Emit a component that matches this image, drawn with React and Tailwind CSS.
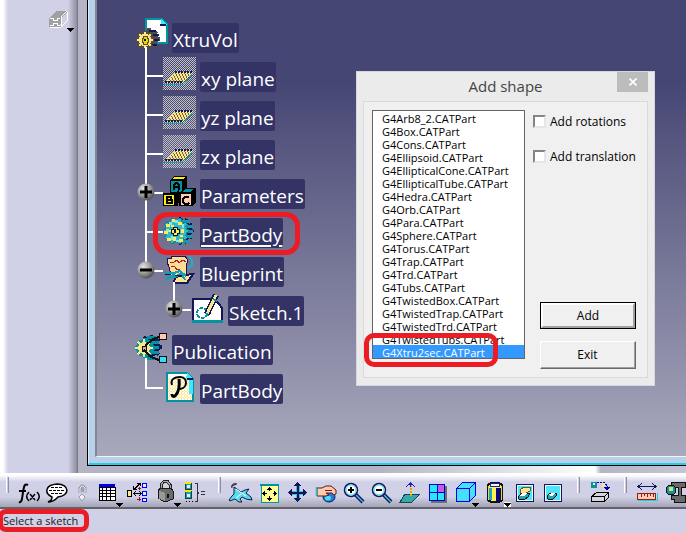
import React from "react";

const NAVY = "#15155a";
const TEAL = "#0093a0";

const shapes = [
  "G4Arb8_2.CATPart",
  "G4Box.CATPart",
  "G4Cons.CATPart",
  "G4Ellipsoid.CATPart",
  "G4EllipticalCone.CATPart",
  "G4EllipticalTube.CATPart",
  "G4Hedra.CATPart",
  "G4Orb.CATPart",
  "G4Para.CATPart",
  "G4Sphere.CATPart",
  "G4Torus.CATPart",
  "G4Trap.CATPart",
  "G4Trd.CATPart",
  "G4Tubs.CATPart",
  "G4TwistedBox.CATPart",
  "G4TwistedTrap.CATPart",
  "G4TwistedTrd.CATPart",
  "G4TwistedTubs.CATPart",
  "G4Xtru2sec.CATPart",
];

/* Outline of a toothed wheel around (cx, cy) */
function gearPath(cx, cy, inner, outer, teeth) {
  const points = [];
  const step = (Math.PI * 2) / teeth;
  for (let i = 0; i < teeth; i += 1) {
    const a = i * step;
    [
      [-0.25, inner],
      [-0.2, outer],
      [0.2, outer],
      [0.25, inner],
    ].forEach(([k, r]) => {
      points.push(`${(cx + r * Math.cos(a + k * step)).toFixed(2)} ${(cy + r * Math.sin(a + k * step)).toFixed(2)}`);
    });
  }
  return `M${points.join("L")}z`;
}

/* Checkerboard of single cells over a rectangle */
function checkerPath(x0, y0, width, height) {
  let d = "";
  for (let y = 0; y < height; y += 1) {
    for (let x = y % 2; x < width; x += 2) d += `M${x0 + x} ${y0 + y}h1v1h-1z`;
  }
  return d;
}

/* Sparse dots over the slanted sheet of a plane */
function weavePath() {
  let d = "";
  for (let y = 20; y < 29; y += 2) {
    const left = 13 - (y - 19);
    for (let x = left; x < left + 17; x += 3) d += `M${x} ${y}h1v1h-1zM${x + 1} ${y + 1}h1v1h-1z`;
  }
  return d;
}

const DOTS = checkerPath(0, 4, 33, 33);
const WEAVE = weavePath();

/* ---------- tree drawings: every one is 33 x 39, one row high ---------- */

function RowArt({ children }) {
  return (
    <svg viewBox="0 0 33 39" className="h-[39px] w-[33px] shrink-0" shapeRendering="crispEdges" aria-hidden="true">
      {children}
    </svg>
  );
}

function ProductArt() {
  return (
    <RowArt>
      <path d="M11 5h16l5 5v19H11z" fill="#fff" stroke={TEAL} strokeWidth="2" />
      <path d="M26 5l6 6h-6z" fill="#40e8ff" />
      <path d="M25 10h6v2h-6z" fill={NAVY} />
      <path d={gearPath(14, 25, 9, 11, 8)} fill="#4b4b4b" />
      <path d="M14 17h7M18 21h6M18 26h6M15 31h7" stroke={NAVY} strokeWidth="2" />
      <path d={gearPath(10, 26, 7, 9, 8)} fill="#ffe68a" stroke="#55502f" strokeWidth="1" />
      <path d="M8 22h4v2h1v4h-1v2H8v-2H7v-4h1z" fill="#e8d800" stroke="#55502f" strokeWidth="1" />
      <path d="M9 25h2v2H9z" fill="#111" />
      <path d="M10 33h2v6h-2z" fill="#fff" />
    </RowArt>
  );
}

function PlaneArt() {
  return (
    <RowArt>
      <path d={DOTS} fill="#c2c2c2" />
      <path d="M12 19h18L20 30H2z" fill="#ffe68a" />
      <path d={WEAVE} fill="#6b6446" />
      <path d="M12 19h18M2 29h18" stroke={NAVY} strokeWidth="2" strokeDasharray="2 1" />
      <path d="M1 31h20l9-11" fill="none" stroke="#1b9fb0" strokeWidth="1" />
    </RowArt>
  );
}

function BlocksArt() {
  return (
    <RowArt>
      <path d="M7 10l4-4h13v13l-4 4H7z" fill="#000" />
      <path d="M11 7h11l-2 2H9z" fill="#fff000" />
      <path d="M8 11h11v11H8z" fill={TEAL} />
      <path d="M11 20v-5l2-2h1l2 2v5M11 17h5" fill="none" stroke="#000" strokeWidth="1.5" />
      <path d="M0 23h15v13H0zM12 23l4-4v13l-3 4z" fill="#000" />
      <path d="M1 25h10v10H1z" fill="#fff000" />
      <path d="M4 27h4v3H4zM4 30h5v3H4z" fill="none" stroke="#000" strokeWidth="1.5" />
      <path d="M16 23l5-5h12v14l-4 4H16z" fill="#000" />
      <path d="M22 19h8l-2 3h-8z" fill={TEAL} />
      <path d="M18 24h10v11H18z" fill="#ffcbae" />
      <path d="M26 28l-1-1h-3l-2 2v3l2 2h3l1-1" fill="none" stroke="#000" strokeWidth="1.5" />
    </RowArt>
  );
}

function BodyArt() {
  return (
    <RowArt>
      <path d={gearPath(17, 22, 12, 14, 12)} fill={NAVY} />
      <path d="M18 12h9M21 17h9M21 22h9M21 27h9M18 32h9" stroke="#1c98a8" strokeWidth="3" />
      <path d={gearPath(13, 22, 11, 13, 10)} fill="#35b9ca" stroke="#0c8496" strokeWidth="1" />
      <path d="M6 13h3v3H6zM12 11h3v3h-3zM19 15h2v4h-2zM3 20h3v3H3zM13 31h4v2h-4zM8 27h2v4H8z" fill="#7ceaf5" />
      <path d="M9 10h3v3H9zM3 15h4v3H3zM15 13h4v3h-4zM1 22h4v3H1zM6 21h2v2H6zM4 29h4v3H4zM10 28h3v4h-3zM16 30h4v3h-4zM18 20h3v4h-3zM8 16h3v2H8zM17 26h3v2h-3z" fill="#ffec50" />
      <path d="M10 18h4v2h2v4h-2v2h-4v-2H8v-4h2z" fill="#ffec50" stroke="#061c38" strokeWidth="1" />
      <path d="M11 20h2v4h-2z" fill="#061c38" />
    </RowArt>
  );
}

function BlueprintArt() {
  return (
    <RowArt>
      <path d="M4 10h4V8h14l3 4-2 6v8l-2 3-6 3-7-5-2-8-2-5z" fill="#ffdc96" stroke={NAVY} strokeWidth="1" />
      <path d="M7 14h4l3-2 2 3 4-3 3 2M8 18l4 1 2 3 3-1" fill="none" stroke="#a41d28" strokeWidth="1" />
      <path d="M12 29l10-2 8-1-6 9H11z" fill="#ffe68a" stroke={NAVY} strokeWidth="2" />
      <path d="M1 25h10l6-2 6 5M4 29h8l7-4M3 32l9-6M18 25l4 7" fill="none" stroke="#159db3" strokeWidth="2" />
      <path d="M2 27l5-1M12 27l7 1" stroke={NAVY} />
      <path d="M26 8l3 4v5l-4 3" fill="none" stroke="#22afc3" strokeWidth="2" />
      <path d="M10 34h2v5h-2z" fill="#fff" />
    </RowArt>
  );
}

function SketchArt() {
  return (
    <RowArt>
      <path d="M2 12h22l7 9v13H2z" fill="#fff" stroke={NAVY} strokeWidth="2" />
      <path d="M1 33h31v3H1z" fill={TEAL} />
      <circle cx="11" cy="26" r="5" fill="none" stroke={TEAL} strokeWidth="2" strokeDasharray="4 1" />
      <path d="M25 8L16 27" stroke={NAVY} strokeWidth="6" />
      <path d="M25 8L16 27" stroke="#ffe68a" strokeWidth="3" />
      <path d="M22 12l4 2M15 26l2 3" stroke={TEAL} strokeWidth="2" />
    </RowArt>
  );
}

function PublicationArt() {
  return (
    <RowArt>
      <path d={gearPath(15, 21, 10, 12, 9)} fill={NAVY} />
      <path d="M12 11h9M16 16h8M17 21h7M16 26h8M12 32h9" stroke={TEAL} strokeWidth="3" />
      <path d={gearPath(10, 22, 9, 10, 8)} fill={TEAL} />
      <path d={gearPath(9, 22, 6, 9, 8)} fill="#ffe68a" />
      <path d="M7 20h4v5H7z" fill="#d6ad85" stroke="#111" />
      <path d="M10 20l8-7 6-2M9 24l7 7 8 3" fill="none" stroke="#111" strokeWidth="2" />
      <path d="M24 7h7v6h-7z" fill="#ffcbae" stroke="#111" />
      <path d="M24 30h7v6h-7z" fill="#33dff5" stroke="#111" />
      <path d="M10 32h2v7h-2z" fill="#fff" />
    </RowArt>
  );
}

function PublishedArt() {
  return (
    <RowArt>
      <defs>
        <pattern id="grain" width="3" height="3" patternUnits="userSpaceOnUse">
          <path d="M0 0h3v3H0z" fill="#fff" />
          <path d="M0 0h1v2H0zM1 2h2v1H1z" fill="#ffe68a" />
        </pattern>
      </defs>
      <path d="M4 8h20l6 6v22H4z" fill="url(#grain)" stroke={TEAL} strokeWidth="2" />
      <path d="M5 9h18v4H5z" fill="#fff" />
      <path d="M24 8l6 6v15h-4V14h-3z" fill="#40e8ff" />
      <path d="M24 14h6" stroke={NAVY} strokeWidth="2" />
      <g shapeRendering="auto" fill="none" stroke="#000">
        <path d="M16 14c1 8 0 13-4 17-2 1-3 0-3-2" strokeWidth="3" />
        <path d="M9 20c-2-6 3-8 8-8 8 0 8 11 0 12" strokeWidth="2" />
      </g>
    </RowArt>
  );
}

/* Gutter left of a row: guide line, stub, and the expand knob where there is one */
function Gutter({ knob, last }) {
  return (
    <svg viewBox="0 0 28 39" className="h-[39px] w-7 shrink-0" aria-hidden="true">
      <defs>
        <radialGradient id="ball" cx="35%" cy="30%" r="75%">
          <stop offset="0" stopColor="#e4e4e4" />
          <stop offset="0.5" stopColor="#a0a0a0" />
          <stop offset="1" stopColor="#4c4c4c" />
        </radialGradient>
      </defs>
      <g fill="#fff" shapeRendering="crispEdges">
        <rect x="10" y="0" width="2" height={last ? 24 : 39} />
        <rect x="10" y="22" width="18" height="2" />
      </g>
      {knob && (
        <>
          <circle cx="11" cy="22" r="8.5" fill="url(#ball)" />
          <path d={knob === "plus" ? "M5 22h12M11 16v12" : "M5 22h12"} stroke="#000" strokeWidth="3" />
        </>
      )}
    </svg>
  );
}

function Mark({ className }) {
  return <span aria-hidden="true" className={`pointer-events-none absolute border-[5px] border-[#ec1c24] ${className}`} />;
}

function Row({ art, label, knob, last, root, current, children }) {
  return (
    <li>
      <div className="relative flex h-[39px]">
        {!root && <Gutter knob={knob} last={last} />}
        {art}
        <span
          className={`ml-1 mt-[9px] flex h-[30px] items-center rounded-xs bg-[#333366] px-px pt-1 whitespace-nowrap ${current ? "underline decoration-2 underline-offset-3" : ""}`}
        >
          {label}
        </span>
        {current && <Mark className="top-[3px] left-[18px] h-[43px] w-[147px] rounded-[14px]" />}
      </div>
      {children && <ul className={root ? "" : "ml-7"}>{children}</ul>}
    </li>
  );
}

function Tree() {
  return (
    <ul className="pt-[14px] pl-[38px] font-['Open_Sans','Noto_Sans',sans-serif] text-[19px] leading-6 text-white">
      <Row root art={<ProductArt />} label="XtruVol">
        <Row art={<PlaneArt />} label="xy plane" />
        <Row art={<PlaneArt />} label="yz plane" />
        <Row art={<PlaneArt />} label="zx plane" />
        <Row art={<BlocksArt />} label="Parameters" knob="plus" />
        <Row art={<BodyArt />} label="PartBody" current />
        <Row art={<BlueprintArt />} label="Blueprint" knob="minus" last>
          <Row art={<SketchArt />} label="Sketch.1" knob="plus" last />
        </Row>
      </Row>
      <Row root art={<PublicationArt />} label="Publication">
        <Row art={<PublishedArt />} label="PartBody" last />
      </Row>
    </ul>
  );
}

/* ---------- dialog ---------- */

function Check({ id, label }) {
  return (
    <div className="flex h-[15px] items-center gap-1">
      <input
        id={id}
        type="checkbox"
        className="size-[13px] appearance-none border-2 border-t-[#858585] border-r-[#e6e6e6] border-b-[#e6e6e6] border-l-[#858585] bg-white checked:bg-[#3399ff]"
      />
      <label htmlFor={id} className="whitespace-nowrap">{label}</label>
    </div>
  );
}

function AddShapeDialog() {
  return (
    <section
      role="dialog"
      aria-label="Add shape"
      className="absolute top-[71px] left-[259px] w-[299px] border border-[#d6d6dc] bg-[#ebebeb] px-[6px] pb-[7px] font-['Open_Sans','Noto_Sans',sans-serif] text-black"
    >
      <header className="relative flex h-[29px] items-center justify-center">
        <h1 className="text-[15px] text-[#444]">Add shape</h1>
        <button type="button" aria-label="Close" className="absolute top-0 right-0 flex h-5 w-[31px] items-center justify-center bg-[#bcbcbc]">
          <svg viewBox="0 0 8 8" className="size-2" aria-hidden="true">
            <path d="M0.5 0.5l7 7M7.5 0.5l-7 7" stroke="#fff" strokeWidth="1.6" />
          </svg>
        </button>
      </header>
      <div className="flex h-[277px] gap-2 border border-[#dadada] bg-[#f0f0f0] px-2 pt-2">
        <div className="relative h-[249px] w-[153px] shrink-0">
          <select
            size={19}
            aria-label="Shapes"
            defaultValue="G4Xtru2sec.CATPart"
            className="block h-[249px] w-full overflow-hidden rounded-none border border-[#646464] bg-white p-0 text-[11px] leading-[13px]"
          >
            {shapes.map((s) => (
              <option key={s} value={s} className="h-[13px] min-h-0 py-0 pr-0 pl-[9px] leading-[13px] checked:bg-[#3399ff] checked:text-white">
                {s}
              </option>
            ))}
          </select>
          <Mark className="top-[223px] -left-[8px] h-[34px] w-[134px] rounded-[10px]" />
        </div>
        <div className="flex flex-1 flex-col text-xs leading-[15px]">
          <div className="flex flex-col gap-5 pt-1">
            <Check id="rot" label="Add rotations" />
            <Check id="tra" label="Add translation" />
          </div>
          <div className="mt-auto mb-2 ml-[7px] flex w-24 flex-col gap-3">
            <button type="button" className="h-[27px] border border-black bg-[#f0f0f0] p-0">
              <span className="flex h-full items-center justify-center border-2 border-t-white border-r-[#a0a0a0] border-b-[#a0a0a0] border-l-white">Add</span>
            </button>
            <button type="button" className="h-7 border border-t-white border-r-[#696969] border-b-[#696969] border-l-white bg-[#f0f0f0] p-0">
              <span className="flex h-full items-center justify-center border-r border-b border-[#a0a0a0]">Exit</span>
            </button>
          </div>
        </div>
      </div>
    </section>
  );
}

/* ---------- bottom toolbar ---------- */

/* low: the drawing starts four rows down instead of one */
function Tool({ name, wide, low, smooth, children }) {
  return (
    <button type="button" aria-label={name} className={`h-[35px] shrink-0 ${wide ? "w-8" : "w-7"}`}>
      <svg
        viewBox={`0 ${low ? -4 : -1} ${wide ? 32 : 28} 35`}
        className="h-[35px] w-full"
        fill="none"
        shapeRendering={smooth ? "auto" : "crispEdges"}
        aria-hidden="true"
      >
        {children}
      </svg>
    </button>
  );
}

function Shade({ d }) {
  return <path d={d} stroke="#b4b4c4" strokeWidth="2" strokeDasharray="1 1" />;
}

function Grip({ className }) {
  return (
    <span aria-hidden="true" className={`h-full shrink-0 pt-1 ${className}`}>
      <span className="block h-4 w-[3px] border-r border-l border-r-[#8e8ea4] border-l-white bg-[#cacade]" />
    </span>
  );
}

function Toolbar() {
  return (
    <div role="toolbar" aria-label="Tools" className="flex h-9 shrink-0 overflow-hidden border-b-2 border-[#62626c] bg-[linear-gradient(to_bottom,#ffffff_0,#ffffff_2px,#d0d0e6_9px,#d0d0e6_24px,#a4a4b6_100%)]">
      <Grip className="w-[15px] pl-[6px]" />
      <Tool name="Formula" low smooth>
        <Shade d="M5 27h16M20 25h6" />
        <path d="M13 8c-4-2-4 2-5 7-1 7-1 11-4 10M4 14h7" stroke="#000" strokeWidth="2" />
        <path d="M14 15c-3 3-3 6 0 9M22 15c3 3 3 6 0 9M15 17l5 6M20 17l-5 6" stroke="#000" strokeWidth="1.5" />
      </Tool>
      <Tool name="Comment" low smooth>
        <Shade d="M11 26h14" />
        <path d="M9 20c-8-4-7-12 5-13 13 0 13 12 1 13-2 2-4 5-10 5 3-1 4-3 4-5z" fill="#fff" stroke="#000" strokeWidth="1.5" />
        <path d="M8 10.500h12M6 13.500h16M8 16.500h11" stroke="#000" strokeDasharray="3 1" />
      </Tool>
      <Tool name="Link" low smooth>
        <path d="M9 16v-5l2-2h1l2 2v5M9 13h5" stroke="#9a9aa8" strokeWidth="3" />
        <path d="M9 16v-5l2-2h1l2 2v5" stroke="#ececf2" />
        <path d="M11 17l3 3-3 4-3-4z" fill="#f4f4f4" stroke="#9a9aa8" />
      </Tool>
      <Tool name="Design table" low>
        <Shade d="M4 26h14" />
        <path d="M0 9h16v15H0z" fill="#fff" />
        <path d="M0 7h16v3H0z" fill="#0000e8" />
        <path d="M0 10h16v13H0zM3.500 10v13M7.500 10v13M11.500 10v13M0 13.500h16M0 16.500h16M0 19.500h16" stroke="#000" />
        <path d="M17 26h7l-3.500 4z" fill="#000" />
      </Tool>
      <Tool name="Structure" low>
        <Shade d="M8 27h12" />
        <path d="M0.500 13.500h4v6h-4z" fill="#ffe68a" stroke="#000" />
        <path d="M15.500 6.500h4v4h-4zM15.500 14.500h4v4h-4zM15.500 21.500h4v3h-4z" fill="#d9f3ff" stroke="#0000ff" />
        <path d="M7 16.500h7M7 12.500l6-6M9 14l-2 2.500 2 2.500M12 14l2 2.500-2 2.500M10 6h3.500v3M6.500 9v3.500h3" stroke="#000" />
        <path d="M12.500 10v3M11 11.500h3M12.500 20v4M10 22.500h4" stroke="#b00020" />
      </Tool>
      <Tool name="Lock" low>
        <Shade d="M10 27h12" />
        <path d="M6 13V8l3-4h3l3 4v5" stroke="#222" strokeWidth="3" />
        <path d="M6 13V8l3-4h3l3 4v5" stroke="#aaa" />
        <path d="M3 13l3-2h10l2 3v8l-8 3-7-4z" fill="#6b6b6b" stroke="#1b1b1b" />
        <path d="M4 14l6 2v8l-6-2z" fill="#999" />
        <path d="M12 17h2v4h-2z" fill="#111" />
        <path d="M19 26h7l-3.500 4z" fill="#000" />
      </Tool>
      <Tool name="Relations" low>
        <path d="M2 6h6v6H2zM2 14h6v7H2z" fill="#1b9fa6" stroke="#1b3c40" />
        <path d="M2 6h6M2 14h6" stroke="#f6e600" strokeWidth="2" />
        <path d="M4 8h3v3H4zM4 17h3v3H4z" fill="#d4f4ff" />
        <path d="M3 24h7" stroke="#000" strokeDasharray="1 2" />
        <path d="M12 6.500h2v8l2 1.500-2 1.500v7h-2" stroke="#333" />
        <path d="M18 14.500h4M18 17.500h4" stroke="#333" />
        <Shade d="M14 27h12" />
      </Tool>
      <Grip className="w-4 pl-[7px]" />
      <Tool name="Fly mode" smooth>
        <Shade d="M6 28h18" />
        <path d="M7 13l3 2 4 3 4-2 4-1-3 4 5 4 1 3-6-1-4-2-2 2 2 3h-3l-4-3-5 2-1-1 3-4 2-2z" fill="#57dcec" stroke="#111c4e" />
        <path d="M9 15l10 7M9 24l5-4" stroke="#fff" />
        <path d="M5 12l4-2M5 14c-1-3 1-5 5-4" stroke="#111" />
      </Tool>
      <Tool name="Fit all in">
        <Shade d="M7 29h14" />
        <path d="M6 11h17v17H6z" fill="#ffff96" stroke={TEAL} />
        <path d="M5 10h19v2H5z" fill={TEAL} />
        <path d="M14.500 13v4M14.500 22v4M8 19.500h4M18 19.500h4" stroke="#000" />
        <path d="M14.500 13l2.500 3h-5zM14.500 27l2.500-3h-5zM7 19.500l3-2.500v5zM22 19.500l-3-2.500v5z" fill="#000" />
      </Tool>
      <Tool name="Pan">
        <Shade d="M6 28h16" />
        <path d="M14.500 11v15M7 18.500h16" stroke="#33c6e0" strokeWidth="4" />
        <path d="M14.500 10v17M6 18.500h17" stroke={NAVY} strokeWidth="2" />
        <path d="M14.500 8l4 4h-8zM14.500 28l4-4h-8zM5 18.500l4-4v8zM24 18.500l-4-4v8z" fill={NAVY} />
      </Tool>
      <Tool name="Rotate" smooth>
        <Shade d="M7 28h18" />
        <ellipse cx="18" cy="23" rx="6" ry="5" fill="#2478dd" stroke={NAVY} />
        <ellipse cx="17" cy="24" rx="3" ry="2.500" fill="#45dff6" />
        <path d="M6 14l5 0 4-2h5l5 4v4l-2 1-2-2h-6l3 2-3 1-4 0H6z" fill="#ffcbae" stroke="#5c1616" />
        <path d="M5.500 13v9" stroke="#22b8cf" strokeWidth="1.500" />
        <path d="M14 16.500h7" stroke="#7e1a1a" />
      </Tool>
      <Tool name="Zoom in" smooth>
        <Shade d="M12 27h12" />
        <path d="M16 20l8 8" stroke={NAVY} strokeWidth="4" />
        <path d="M16 20l8 8" stroke="#38c8df" strokeWidth="1.500" />
        <circle cx="12" cy="16" r="6.500" fill="#fff" stroke={NAVY} strokeWidth="1.500" />
        <circle cx="12" cy="16" r="5" stroke="#3edbea" />
        <path d="M9 16h6M12 13v6" stroke="#000" strokeWidth="2" />
      </Tool>
      <Tool name="Zoom out" smooth>
        <Shade d="M12 27h12" />
        <path d="M16 20l8 8" stroke={NAVY} strokeWidth="4" />
        <path d="M16 20l8 8" stroke="#38c8df" strokeWidth="1.500" />
        <circle cx="12" cy="16" r="6.500" fill="#fff" stroke={NAVY} strokeWidth="1.500" />
        <circle cx="12" cy="16" r="5" stroke="#3edbea" />
        <path d="M9 16h6" stroke="#000" strokeWidth="2" />
      </Tool>
      <Tool name="Normal view">
        <Shade d="M8 30h12" />
        <path d="M10 20h15l-8 8H5z" fill="#37a9a9" stroke="#0c4755" />
        <path d="M15.500 11v12" stroke="#e6a800" strokeWidth="2" strokeDasharray="2 1" />
        <path d="M11 13l4.500-4L20 13M15.500 9v4" stroke="#1d1dc8" />
      </Tool>
      <Tool name="Multi-view">
        <path d="M8 12h16v17H8z" fill="#6d6d76" />
        <path d="M6.500 10.500h15v16h-15z" fill="#27e8fa" stroke="#0000d0" />
        <path d="M15 11h6v7h-6z" fill="#c95be0" />
        <path d="M14.500 10v16M6 18.500h16" stroke="#0000d0" />
      </Tool>
      <Tool name="Isometric view">
        <Shade d="M19 26h9" />
        <path d="M5.500 14.500l6-6h13v13l-6 6h-13z" fill="#45e0ff" stroke="#0000e0" />
        <path d="M5.500 14.500h13v13M18.500 14.500l6-6" stroke="#0000e0" />
        <path d="M21 29h7l-3.500 4z" fill="#000" />
      </Tool>
      <Tool name="Shading" wide>
        <path d="M9 11l3-2h8l3 2v15l-3 2h-8l-3-2z" fill="#fff04a" stroke="#111" strokeWidth="2" />
        <ellipse cx="16" cy="11" rx="5" ry="2" fill="#e8f9ff" stroke="#1717b8" />
        <path d="M10 14h3v12h-3z" fill="#1d9fdc" />
        <path d="M17 14h5v13h-5z" fill="#08087c" />
        <path d="M9.500 12v14M22.500 12v14" stroke="#f0df00" />
        <path d="M25 28h8v6h-8z" fill="#fff" />
        <path d="M25 29h7l-3.500 4z" fill="#000" />
      </Tool>
      <Tool name="Hide and show">
        <Shade d="M6 29h18" />
        <path d="M5.500 10.500h17v17h-17z" fill="#eafcff" stroke={NAVY} />
        <path d="M7 12h14v14H7z" fill="#50e2f6" />
        <path d="M9 16l4-3h7l-1 4-4 2H9z" fill="#ffe68a" stroke="#5f5830" />
        <path d="M7 23l4-4h8l-2 4-3 2H8z" fill="#20a3ad" stroke="#111" />
        <path d="M8 22l4-3h5l-4 3z" fill="#fff" />
      </Tool>
      <Tool name="Swap visible space">
        <Shade d="M6 29h18" />
        <path d="M5.500 10.500h17v17h-17z" fill="#eafcff" stroke={NAVY} />
        <path d="M7 12h14v14H7z" fill="#50e2f6" />
        <path d="M8 22l4-3h6l-1 3-3 3H9z" fill="#20a3ad" stroke="#111" />
        <path d="M9 21l4-2h4l-4 3z" fill="#fff" />
      </Tool>
      <Grip className="w-[19px] pl-[10px]" />
      <Tool name="Apply material">
        <Shade d="M8 29h12" />
        <path d="M5.500 22.500l5-4h12v5l-4 4h-13z" fill="#d4d4dc" stroke="#000" />
        <path d="M5.500 22.500h13v5M18.500 22.500l4-4" stroke="#000" />
        <circle cx="8" cy="11" r="3.500" fill="#138d9b" />
        <path d="M7 9h2v2H7z" fill="#d6ffff" />
        <path d="M11 8.500h7l3 3v3" stroke="#0000d8" strokeDasharray="2 1" />
        <path d="M16 9h3v4h-3z" fill="#ffe68a" />
        <path d="M17 13h7l-3 4z" fill="#0000a0" />
      </Tool>
      <Grip className="w-[19px] pl-[10px]" />
      <Tool name="Measure between">
        <Shade d="M6 29h16" />
        <path d="M5 12.500h18M9 9l-4 3.500L9 16M19 9l4 3.500-4 3.500" stroke={NAVY} />
        <path d="M4.500 19.500h18v6h-18z" fill="#ffcbae" stroke="#8c2020" />
        <path d="M8.500 20v3M11.500 20v2M14.500 20v3M17.500 20v2M20.500 20v3" stroke="#8c2020" />
        <path d="M5 26.500h19v-8" stroke="#22d0e6" />
      </Tool>
      <Tool name="Measure item">
        <path d="M10 8h14v5h-4v8h4v7H13v-3h-3v-4h7v-8h-7z" fill="#6a6a6a" stroke="#111" />
        <circle cx="10" cy="16" r="5" fill="#188fa0" stroke="#111" />
        <path d="M8 13h4v4H8z" fill="#d8e45a" />
      </Tool>
    </div>
  );
}

export default function App() {
  return (
    <div className="flex h-screen flex-col overflow-hidden bg-[#d0d0e6]">
      <div className="flex min-h-0 flex-1">
        <aside className="flex w-[78px] shrink-0 items-start border-r border-[#77777f] bg-[linear-gradient(to_right,#ffffff_0,#ffffff_3px,#d0d0e6_8px,#d0d0e6_68px,#8e8ea0_100%)]">
          <button type="button" aria-label="Solid" className="mt-2 ml-12 h-6 w-7">
            <svg viewBox="0 0 28 24" className="h-6 w-7" shapeRendering="crispEdges" aria-hidden="true">
              <path d="M1 10l7-7h11v9l-7 7H1z" fill="#a0a0a0" />
              <path d="M14 9l5-5v8l-6 6H12z" fill="#d0d0e6" />
              <path d="M19 4v9l-6 6H2M13 9v9M13 9l6-6" fill="none" stroke="#fff" />
              <path d="M2 10h3v2h4v-2h3M2 17h3v-2h4v2h3" fill="none" stroke="#fff" />
              <path d="M19 20h7l-3.500 4z" fill="#000" />
            </svg>
          </button>
        </aside>
        <div className="flex min-w-0 flex-1 flex-col bg-[#b4b4c6]">
          <div className="ml-[9px] flex min-h-0 flex-1 border-b border-l border-black">
            <div className="flex min-w-0 flex-1 border-b-2 border-l border-b-[#22cfe4] border-l-[#d8ecf8] bg-[#b8d0e8] pb-[6px] pl-[6px]">
              <main className="relative min-w-0 flex-1 border-b border-l-2 border-b-[#f4f4f4] border-l-[#858590] bg-[linear-gradient(to_bottom,#464674_0,#464674_18%,#a9a9bd_100%)]">
                <Tree />
                <AddShapeDialog />
              </main>
            </div>
          </div>
          <div className="h-[7px] shrink-0 bg-[linear-gradient(to_right,#b4b4c6_0,#b4b4c6_50%,#ffffff_85%,#b4b4c6_86%,#c4c4d2_100%)]" />
        </div>
      </div>
      <Toolbar />
      <footer className="relative flex h-6 shrink-0 items-center pl-[3px] font-['Open_Sans','Noto_Sans',sans-serif] text-[11px] text-[#1a1a1a]">
        Select a sketch
        <Mark className="top-0 -left-[2px] h-[23px] w-[91px] rounded-lg" />
      </footer>
    </div>
  );
}
